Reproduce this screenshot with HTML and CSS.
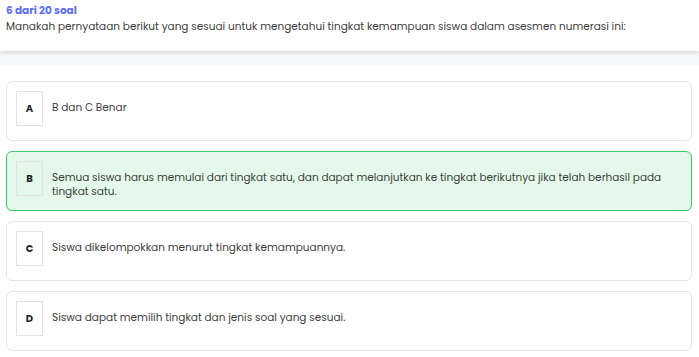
FILE: index.html
```html
<!DOCTYPE html>
<html lang="id">

<head>
  <meta charset="UTF-8">
  <meta name="viewport" content="width=device-width, initial-scale=1.0">
  <title>Soal 6 dari 20</title>
  <link rel="stylesheet" href="styles.css">
</head>

<body>
  <div class="header">
    <div class="counter">6 dari 20 soal</div>
    <div class="question">Manakah pernyataan berikut yang sesuai untuk mengetahui tingkat kemampuan siswa dalam asesmen numerasi ini:</div>
  </div>
  <div class="band"></div>

  <div class="options">
    <div class="option">
      <div class="letter">A</div>
      <div class="option-text">B dan C Benar</div>
    </div>
    <div class="option selected">
      <div class="letter">B</div>
      <div class="option-text">Semua siswa harus memulai dari tingkat satu, dan dapat melanjutkan ke tingkat berikutnya jika telah berhasil pada tingkat satu.</div>
    </div>
    <div class="option">
      <div class="letter">C</div>
      <div class="option-text">Siswa dikelompokkan menurut tingkat kemampuannya.</div>
    </div>
    <div class="option">
      <div class="letter">D</div>
      <div class="option-text">Siswa dapat memilih tingkat dan jenis soal yang sesuai.</div>
    </div>
  </div>
</body>

</html>
```

FILE: styles.css
```css
body {
  font-family: 'Poppins', 'Open Sans', sans-serif;
  background-color: #ffffff;
  color: #3d3d3d;
  margin: 0;
}

.header {
  background-color: #ffffff;
  padding: 4px 6px 17px;
  box-shadow: 0 2px 3px rgba(0, 0, 0, 0.12);
  position: relative;
}

.counter {
  color: #5d6ff6;
  font-size: 10.5px;
  font-weight: 700;
  line-height: 14px;
}

.question {
  margin-top: 2px;
  font-size: 10.5px;
  line-height: 14px;
}

.band {
  height: 14px;
  background-color: #f6f7f9;
}

.options {
  padding: 16px 7px 0 6px;
}

.option {
  display: flex;
  align-items: flex-start;
  gap: 9px;
  min-height: 60px;
  padding: 9px;
  margin-bottom: 10px;
  border: 1px solid #e6e6e6;
  border-radius: 6px;
  background-color: #ffffff;
  box-sizing: border-box;
}

.option.selected {
  background-color: #e4f9ea;
  border-color: #3fc46f;
}

.letter {
  width: 27px;
  height: 35px;
  flex-shrink: 0;
  display: flex;
  align-items: center;
  justify-content: center;
  border: 1px solid #e3e3e3;
  box-sizing: border-box;
  color: #222;
  font-size: 10px;
  font-weight: 700;
}

.option-text {
  padding-top: 10px;
  font-size: 10.5px;
  line-height: 14px;
}
```
